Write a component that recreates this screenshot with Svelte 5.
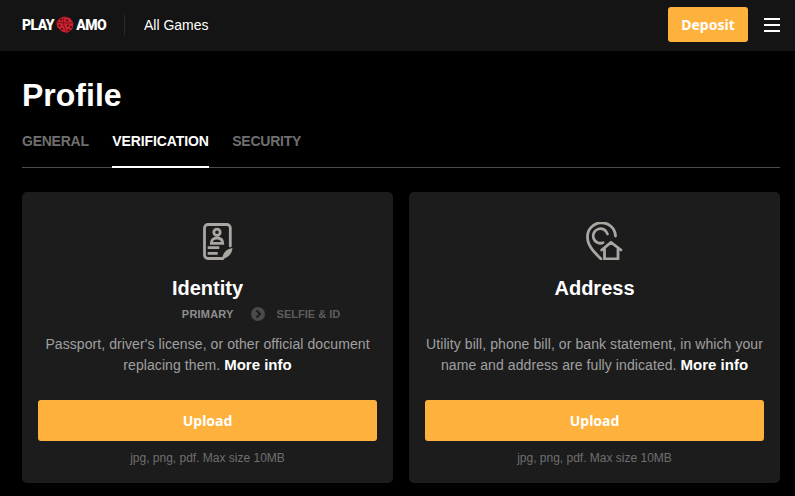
<script>
  const tabs = [
    { label: "GENERAL", active: false },
    { label: "VERIFICATION", active: true },
    { label: "SECURITY", active: false },
  ];
</script>

<div class="page">
  <header class="topbar">
    <div class="brand">
      <span class="logo">
        <span>PLAY</span>
        <svg class="dice" viewBox="0 0 18 18" width="18" height="18" aria-hidden="true">
          <path d="M8 .5l6 1.500 3.500 5-1 6-5.500 4-5-1.500L1 11 .5 6 4 2z" fill="#cc2230" />
          <path d="M8 .5L7 7 .5 6M7 7l10.500 0M7 7l4 10.500" stroke="#6e0f15" stroke-width="0.8" fill="none" />
          <circle cx="5" cy="3.500" r="1" fill="#3a0a0d" />
          <circle cx="11" cy="4.500" r="1" fill="#3a0a0d" />
          <circle cx="3.500" cy="9.500" r="1" fill="#3a0a0d" />
          <circle cx="6" cy="13" r="1" fill="#3a0a0d" />
          <circle cx="12" cy="9.500" r="1" fill="#3a0a0d" />
          <circle cx="15" cy="11" r="1" fill="#3a0a0d" />
          <circle cx="12.500" cy="14" r="1" fill="#3a0a0d" />
        </svg>
        <span>AMO</span>
      </span>
      <span class="divider"></span>
      <span class="all-games">All Games</span>
    </div>
    <div class="actions">
      <button class="deposit">Deposit</button>
      <div class="burger"><i></i><i></i><i></i></div>
    </div>
  </header>

  <main class="content">
    <h1>Profile</h1>
    <nav class="tabs">
      {#each tabs as tab}
        <span class="tab" class:active={tab.active}>{tab.label}</span>
      {/each}
    </nav>

    <div class="cards">
      <section class="card">
        <svg class="icon" viewBox="0 -1 30 38" width="30" height="38" fill="none" stroke="#aaa7a2" stroke-width="2.800" aria-hidden="true">
          <path d="M27.300 23V5a3.500 3.500 0 0 0-3.500-3.500H5A3.500 3.500 0 0 0 1.500 5v27A3.500 3.500 0 0 0 5 35.500h15" stroke-linecap="round" />
          <circle cx="14" cy="9.300" r="3.200" />
          <path d="M8.300 20.300c0-3.600 2.300-5.300 5.700-5.300s5.700 1.700 5.700 5.300z" />
          <path d="M4.700 24.700h11.600M4.700 30.300h10" />
          <path d="M19 36c1-6 4-10 10.500-11-.5 6-4.500 10-10.500 11z" fill="#aaa7a2" stroke="none" />
        </svg>
        <h2>Identity</h2>
        <div class="steps">
          <span class="step-on">PRIMARY</span>
          <span class="chevron">
            <svg viewBox="0 0 14 14" width="14" height="14" aria-hidden="true">
              <circle cx="7" cy="7" r="7" fill="#4a4a4a" />
              <path d="M5.500 3.500L9 7l-3.500 3.500" fill="none" stroke="#1c1c1c" stroke-width="2" />
            </svg>
          </span>
          <span class="step-off">SELFIE &amp; ID</span>
        </div>
        <p>Passport, driver's license, or other official document replacing them. <b>More info</b></p>
        <button class="upload">Upload</button>
        <small>jpg, png, pdf. Max size 10MB</small>
      </section>

      <section class="card">
        <svg class="icon" viewBox="0 0 38 38" width="38" height="38" fill="none" stroke="#aaa7a2" stroke-width="2.800" aria-hidden="true">
          <path d="M29.500 14A14 14 0 0 0 1.500 15.500C1.500 24 9 31 15 37" stroke-linecap="round" />
          <path d="M17 20.800A7.300 7.300 0 1 1 21.500 12" stroke-linecap="round" />
          <path d="M15.700 28L25 20.300 35 28M18.500 26v11H32V26" stroke-linejoin="round" stroke-linecap="round" />
        </svg>
        <h2>Address</h2>
        <div class="steps"></div>
        <p>Utility bill, phone bill, or bank statement, in which your name and address are fully indicated. <b>More info</b></p>
        <button class="upload">Upload</button>
        <small>jpg, png, pdf. Max size 10MB</small>
      </section>
    </div>
  </main>
</div>

<style>
  :global(body) {
    background: #000;
  }

  .page {
    height: 496px;
    overflow: hidden;
    background: #000;
    font-family: "Liberation Sans", Arial, sans-serif;
    color: #fff;
  }

  .topbar {
    height: 51px;
    box-sizing: border-box;
    padding: 0 15px 2px 22px;
    background: #141414;
    display: flex;
    align-items: center;
    justify-content: space-between;
  }

  .brand {
    display: flex;
    align-items: center;
  }

  .logo {
    display: flex;
    align-items: center;
    gap: 2px;
    width: 84px;
    font-family: "Roboto", sans-serif;
    font-weight: 900;
    font-size: 14px;
    letter-spacing: -0.5px;
    white-space: nowrap;
  }

  .dice {
    flex: none;
  }

  .divider {
    width: 1px;
    height: 20px;
    background: #2a2a2a;
    margin: 0 19px 0 18px;
  }

  .all-games {
    font-size: 14px;
  }

  .actions {
    display: flex;
    align-items: center;
    gap: 16px;
  }

  button {
    border: 0;
    background: #ffb13d;
    color: #fff;
    font-family: "Noto Sans", sans-serif;
    font-weight: 700;
    font-size: 14px;
    border-radius: 3px;
  }

  .deposit {
    width: 80px;
    height: 35px;
  }

  .burger {
    width: 16px;
    display: flex;
    flex-direction: column;
    gap: 4px;
  }

  .burger i {
    display: block;
    height: 2px;
    background: #fff;
  }

  .content {
    padding: 0 15px 0 22px;
  }

  h1 {
    margin: 0;
    padding-top: 26px;
    font-size: 32px;
    line-height: 37px;
    font-weight: 700;
  }

  .tabs {
    display: flex;
    gap: 23.5px;
    margin-top: 13px;
    height: 40px;
    border-bottom: 1px solid #4d4d4d;
  }

  .tab {
    font-size: 14px;
    font-weight: 700;
    letter-spacing: -0.25px;
    color: #6f6f6f;
    line-height: 16px;
    height: 41px;
    box-sizing: border-box;
    padding-top: 6px;
  }

  .tab.active {
    color: #fff;
    letter-spacing: -0.1px;
    border-bottom: 2px solid #fff;
  }

  .cards {
    display: grid;
    grid-template-columns: 371px 371px;
    gap: 16px;
    margin-top: 24px;
  }

  .card {
    height: 291px;
    box-sizing: border-box;
    background: #1c1c1c;
    border-radius: 5px;
    padding: 30px 16px 0;
    display: flex;
    flex-direction: column;
    align-items: center;
    text-align: center;
  }

  .icon {
    display: block;
    flex: none;
    margin-left: 20px;
  }

  h2 {
    margin: 16px 0 0;
    font-size: 20px;
    line-height: 24px;
    font-weight: 700;
  }

  .steps {
    height: 16px;
    margin-top: 6px;
    margin-left: 107px;
    display: flex;
    align-items: center;
    font-size: 11px;
    font-weight: 700;
  }

  .step-on {
    color: #8e8e8e;
    letter-spacing: 0.2px;
  }

  .step-off {
    color: #5c5c5c;
  }

  .chevron {
    display: flex;
    margin: 0 12px 0 17px;
  }

  p {
    margin: 12px -8px 0;
    font-size: 14px;
    line-height: 21px;
    letter-spacing: 0.08px;
    color: #a0a0a0;
    height: 42px;
  }

  p b {
    color: #fff;
    font-size: 15px;
    line-height: 1;
    letter-spacing: 0;
  }

  .upload {
    align-self: stretch;
    height: 41px;
    margin-top: 24px;
    flex: none;
  }

  small {
    margin-top: 9px;
    font-size: 12px;
    line-height: 16px;
    color: #6f6f6f;
  }
</style>
